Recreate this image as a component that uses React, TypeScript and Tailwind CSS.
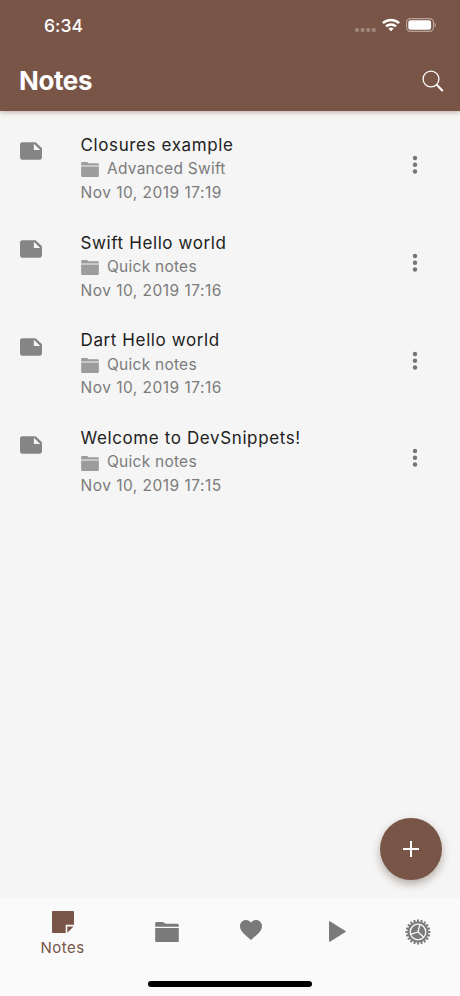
const notes = [
  { title: "Closures example", folder: "Advanced Swift", date: "Nov 10, 2019 17:19" },
  { title: "Swift Hello world", folder: "Quick notes", date: "Nov 10, 2019 17:16" },
  { title: "Dart Hello world", folder: "Quick notes", date: "Nov 10, 2019 17:16" },
  { title: "Welcome to DevSnippets!", folder: "Quick notes", date: "Nov 10, 2019 17:15" },
];

function FolderIcon({ className }: { className: string }) {
  return (
    <svg viewBox="0 0 24 20" fill="currentColor" className={className}>
      <path d="M1.8 0h5.6c.6 0 1 .2 1.5.6l.9.7c.4.3.8.5 1.4.5h11c1 0 1.6.6 1.6 1.5v1.5H.2V1.6C.2.6.8 0 1.8 0Z" />
      <path d="M.2 5.9h23.6v12.5c0 1-.6 1.6-1.6 1.6H1.8c-1 0-1.6-.6-1.6-1.6V5.9Z" />
    </svg>
  );
}

function NoteIcon() {
  return (
    <svg viewBox="2 4 20 16" fill="currentColor" className="h-[18px] w-[22px]">
      <path fillRule="evenodd" d="M22 9.6 16.2 4H4c-1.1 0-2 .9-2 2v12c0 1.1.9 2 2 2h16c1.1 0 2-.9 2-2V9.6ZM14.6 5.3l5.8 5.8h-5.800V5.3Z" />
    </svg>
  );
}

function StatusIcons() {
  return (
    <div className="flex items-center">
      <svg viewBox="0 0 22 6" className="mt-[9px] h-[6px] w-[22px]" fill="#a0857a">
        <rect x="0" y="1" width="4" height="4" rx="1.4" />
        <rect x="5.6" y="1" width="4" height="4" rx="1.4" />
        <rect x="11.2" y="1" width="4" height="4" rx="1.4" />
        <rect x="16.8" y="1" width="4" height="4" rx="1.4" />
      </svg>
      <svg viewBox="0 0 18 14" className="mt-[-1px] ml-[5px] h-[14px] w-[18px]" fill="none" stroke="#fff" strokeWidth="2.5">
        <path d="M.9 5.2a11.6 11.6 0 0 1 16.2 0" />
        <path d="M4 8.4a7.2 7.2 0 0 1 10 0" />
        <path d="m9 13.3 2.6-2.7a3.8 3.8 0 0 0-5.2 0Z" fill="#fff" stroke="none" />
      </svg>
      <svg viewBox="0 0 30 14" className="mt-[-1px] ml-[6px] h-[14px] w-[30px]">
        <rect x=".6" y=".6" width="26.8" height="12.8" rx="3.6" fill="none" stroke="#b9a39b" strokeWidth="1.1" />
        <rect x="2.3" y="2.2" width="22.8" height="9.6" rx="2.2" fill="#fff" />
        <path d="M28.5 4.8c1 .4 1.3 1.2 1.3 2.2s-.3 1.8-1.3 2.2V4.8Z" fill="#b9a39b" />
      </svg>
    </div>
  );
}

function GearIcon() {
  return (
    <svg viewBox="-13 -13 26 26" className="h-[26px] w-[26px]" fill="none">
      <circle r="11.3" stroke="currentColor" strokeWidth="2.4" pathLength="40" strokeDasharray="1.1 .9" transform="rotate(-95)" />
      <circle r="10.6" fill="currentColor" />
      <circle r="7.8" stroke="#fafafa" strokeWidth="1.3" />
      <path d="M0 0 2-7.6M0 0l5.8 5.2M0 0l-7.5 2.3" stroke="#fafafa" strokeWidth="1.3" />
    </svg>
  );
}

export default function App() {
  return (
    <div className="relative flex h-[996px] w-[460px] flex-col overflow-hidden bg-[#f5f5f5] font-['Inter',sans-serif]">
      <header className="z-10 h-[111px] shrink-0 bg-[#795548] text-white shadow-[0_1px_5px_rgba(90,60,30,0.4)]">
        <div className="flex h-[51px] items-center justify-between pr-6 pl-11">
          <span className="pt-[2px] text-[17.5px] font-medium tracking-[0.1px]">6:34</span>
          <StatusIcons />
        </div>
        <div className="flex h-[60px] items-center justify-between pr-4 pl-[19px]">
          <h1 className="mt-[-2px] text-[26px] font-bold tracking-[-0.4px]">Notes</h1>
          <svg viewBox="0 0 22 22" className="h-[22px] w-[22px]" fill="none" stroke="#fff" strokeLinecap="round">
            <circle cx="9" cy="9" r="7.9" strokeWidth="1.3" />
            <path d="m15.2 15.2 5 5.2" strokeWidth="2.1" />
          </svg>
        </div>
      </header>

      <main className="flex-1 pt-[22px]">
        {notes.map((n, i) => (
          <div key={i} className="flex h-[97.8px] items-start pl-5 text-[#7b7b7b]">
            <div className="w-[60.5px] pt-[9.3px] text-[#858585]">
              <NoteIcon />
            </div>
            <div className="flex-1 pt-[0.8px] text-[15.5px] leading-[23.5px] tracking-[0.48px]">
              <div className="text-[17px] tracking-[0.61px] text-[#212121]">{n.title}</div>
              <div className="mt-[-0.4px] mb-[0.4px] flex items-center">
                <FolderIcon className="mt-[2px] mr-[8.5px] h-[15px] w-[18px] text-[#9c9c9c]" />
                <span className="tracking-[0.25px]">{n.folder}</span>
              </div>
              <div>{n.date}</div>
            </div>
            <svg viewBox="0 0 6 20" className="mt-[22px] mr-[42px] h-5 w-[6px]" fill="#757575">
              <circle cx="3" cy="3" r="2.2" />
              <circle cx="3" cy="9.8" r="2.2" />
              <circle cx="3" cy="16.5" r="2.2" />
            </svg>
          </div>
        ))}
      </main>

      <button className="absolute right-[18px] bottom-[116px] flex h-[62px] w-[62px] items-center justify-center rounded-full bg-[#795548] shadow-[0_4px_8px_rgba(60,40,20,0.35)]">
        <svg viewBox="0 0 16 16" className="h-4 w-4" stroke="#fff" strokeWidth="2">
          <path d="M8 0v16M0 8h16" />
        </svg>
      </button>

      <nav className="flex h-[98px] shrink-0 flex-col bg-[#fafafa] text-[#7a7a7a]">
        <div className="flex h-[68px]">
          <div className="flex w-[125px] flex-col items-center pt-[13px] text-[#795548]">
            <svg viewBox="0 0 22 22" className="h-[22px] w-[22px]" fill="currentColor">
              <path d="M1 0h20c.6 0 1 .4 1 1v12.7h-8.3V22H1c-.6 0-1-.4-1-1V1c0-.6.4-1 1-1Z" />
              <path d="M15.3 15.4h6.3l-6.3 6.3v-6.3Z" />
            </svg>
            <span className="mt-[4px] text-[15px] leading-[22px] tracking-[0.5px]">Notes</span>
          </div>
          <div className="flex w-[84px] items-center justify-center">
            <FolderIcon className="mt-[-1px] h-[20px] w-[24px]" />
          </div>
          <div className="flex w-[84px] items-center justify-center">
            <svg viewBox="0 0 22 20" className="mt-[-4px] h-[20px] w-[22px]" fill="currentColor">
              <path d="M16 0c-2.1 0-3.9 1-5 2.7C9.9 1 8.1 0 6 0 2.6 0 0 2.7 0 6c0 5.3 4.8 8.4 11 14 6.2-5.6 11-8.7 11-14 0-3.3-2.6-6-6-6Z" />
            </svg>
          </div>
          <div className="flex w-[84px] items-center justify-center">
            <svg viewBox="0 0 17 21" className="mt-[-1px] ml-[5px] h-[21px] w-[17px]" fill="currentColor">
              <path d="M0 .8C0 .2.4 0 .9.3l15.6 9.6c.5.3.5.8 0 1.1L.9 20.7c-.5.3-.9.1-.9-.5V.8Z" />
            </svg>
          </div>
          <div className="flex flex-1 items-center justify-center pr-[2px]">
            <GearIcon />
          </div>
        </div>
        <div className="mx-auto mt-[15px] h-[6px] w-[164px] rounded-full bg-black" />
      </nav>
    </div>
  );
}
